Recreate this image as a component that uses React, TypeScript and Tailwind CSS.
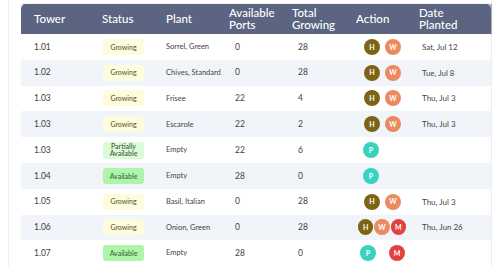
import React from "react";

type Status = "Growing" | "Available" | "Partial";
type Act = "H" | "W" | "M" | "P" | "_";

type Row = {
  tower: string;
  status: Status;
  plant: string;
  ports: string;
  total: string;
  actions: Act[];
  date: string;
  shift: string;
};

const rows: Row[] = [
  { tower: "1.01", status: "Growing", plant: "Sorrel, Green", ports: "0", total: "28", actions: ["H", "W"], date: "Sat, Jul 12", shift: "pl-[21px] gap-[5px]" },
  { tower: "1.02", status: "Growing", plant: "Chives, Standard", ports: "0", total: "28", actions: ["H", "W"], date: "Tue, Jul 8", shift: "pl-[21px] gap-[5px]" },
  { tower: "1.03", status: "Growing", plant: "Frisee", ports: "22", total: "4", actions: ["H", "W"], date: "Thu, Jul 3", shift: "pl-[21px] gap-[5px]" },
  { tower: "1.03", status: "Growing", plant: "Escarole", ports: "22", total: "2", actions: ["H", "W"], date: "Thu, Jul 3", shift: "pl-[21px] gap-[5px]" },
  { tower: "1.03", status: "Partial", plant: "Empty", ports: "22", total: "6", actions: ["P"], date: "", shift: "pl-[20px]" },
  { tower: "1.04", status: "Available", plant: "Empty", ports: "28", total: "0", actions: ["P"], date: "", shift: "pl-[20px]" },
  { tower: "1.05", status: "Growing", plant: "Basil, Italian", ports: "0", total: "28", actions: ["H", "W"], date: "Thu, Jul 3", shift: "pl-[21px] gap-[5px]" },
  { tower: "1.06", status: "Growing", plant: "Onion, Green", ports: "0", total: "28", actions: ["H", "W", "M"], date: "Thu, Jun 26", shift: "pl-[15px] gap-[1px]" },
  { tower: "1.07", status: "Available", plant: "Empty", ports: "28", total: "0", actions: ["P", "_", "M"], date: "", shift: "pl-[17px] gap-[0px]" },
];

const actionColor: Record<Act, string> = {
  H: "bg-[#7d6414]",
  W: "bg-[#ec8a5f]",
  M: "bg-[#e2423f]",
  P: "bg-[#37d3bd]",
  _: "bg-transparent",
};

function Pill({ status }: { status: Status }) {
  if (status === "Growing")
    return (
      <span className="flex h-[16px] w-[41px] items-center justify-center rounded-[3px] bg-[#fdfcdc] text-[7px] font-medium text-[#5f5a36]">
        Growing
      </span>
    );
  if (status === "Available")
    return (
      <span className="flex h-[16px] w-[41px] items-center justify-center rounded-[3px] bg-[#adf5a9] text-[7px] font-medium text-[#3f6a3c]">
        Available
      </span>
    );
  return (
    <span className="flex h-[17px] w-[41px] flex-col items-center justify-center rounded-[3px] bg-[#dcfbd8] text-[7px] leading-[7.5px] font-medium text-[#3f5a3c]">
      <span>Partially</span>
      <span>Available</span>
    </span>
  );
}

function Dot({ a }: { a: Act }) {
  if (a === "_") return <span className="h-[16px] w-[13px]" />;
  return (
    <span
      className={`flex h-[16px] w-[16px] items-center justify-center rounded-full text-[7px] font-bold text-white ${actionColor[a]}`}
    >
      {a}
    </span>
  );
}

export default function App() {
  return (
    <div className="h-[266px] w-[500px] overflow-hidden bg-white font-['Lato',sans-serif]">
      <div className="mx-[8px] h-full border-x border-[#eceef1] pt-[4px] pr-[6px] pl-[12px]">
        <table className="w-[470px] table-fixed border-collapse border-b border-[#e8eaee] text-left">
          <colgroup>
            <col className="w-[68px]" />
            <col className="w-[64px]" />
            <col className="w-[63px]" />
            <col className="w-[63px]" />
            <col className="w-[64px]" />
            <col className="w-[63px]" />
            <col className="w-[85px]" />
          </colgroup>
          <thead>
            <tr className="h-[30px] bg-[#5b6481] text-white shadow-[1px_0_1px_rgba(0,0,0,0.25)]">
              <th className="rounded-tl-[5px] pl-[13px] text-[11.5px] leading-[12px] font-medium">Tower</th>
              <th className="pl-[13px] text-[11.5px] leading-[12px] font-medium">Status</th>
              <th className="pl-[13px] text-[11.5px] leading-[12px] font-medium">Plant</th>
              <th className="pl-[13px] text-[11.5px] leading-[12px] font-medium">
                Available
                <br />
                Ports
              </th>
              <th className="pl-[13px] text-[11.5px] leading-[12px] font-medium">
                Total
                <br />
                Growing
              </th>
              <th className="pl-[13px] text-[11.5px] leading-[12px] font-medium">Action</th>
              <th className="rounded-tr-[5px] pl-[13px] text-[11.5px] leading-[12px] font-medium">
                Date
                <br />
                Planted
              </th>
            </tr>
          </thead>
          <tbody>
            {rows.map((r, i) => (
              <tr key={i} className={`h-[25.8px] ${i % 2 === 1 ? "bg-[#f1f4f9]" : "bg-white"}`}>
                <td className="pl-[13px] text-[8.5px] text-[#3c3c3c]">{r.tower}</td>
                <td className="pl-[14px]">
                  <Pill status={r.status} />
                </td>
                <td className="pl-[13px] text-[7.5px] whitespace-nowrap text-[#444]">{r.plant}</td>
                <td className="pl-[19px] text-[8.5px] text-[#444]">{r.ports}</td>
                <td className="pl-[19px] text-[8.5px] text-[#444]">{r.total}</td>
                <td>
                  <div className={`flex items-center ${r.shift}`}>
                    {r.actions.map((a, j) => (
                      <Dot key={j} a={a} />
                    ))}
                  </div>
                </td>
                <td className="pl-[16px] text-[8px] whitespace-nowrap text-[#444]">{r.date}</td>
              </tr>
            ))}
          </tbody>
        </table>
      </div>
    </div>
  );
}
